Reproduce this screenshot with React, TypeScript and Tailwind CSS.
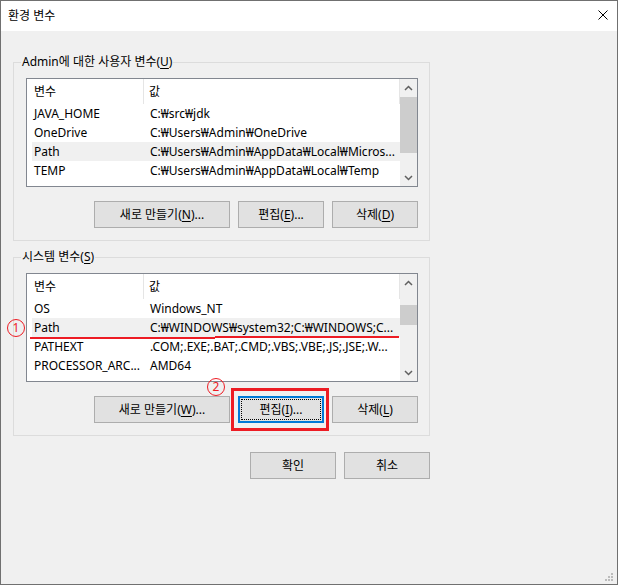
type Row = { name: string; value: string };

const userVars: Row[] = [
  { name: "JAVA_HOME", value: "C:₩src₩jdk" },
  { name: "OneDrive", value: "C:₩Users₩Admin₩OneDrive" },
  { name: "Path", value: "C:₩Users₩Admin₩AppData₩Local₩Micros..." },
  { name: "TEMP", value: "C:₩Users₩Admin₩AppData₩Local₩Temp" },
];

const systemVars: Row[] = [
  { name: "OS", value: "Windows_NT" },
  { name: "Path", value: "C:₩WINDOWS₩system32;C:₩WINDOWS;C..." },
  { name: "PATHEXT", value: ".COM;.EXE;.BAT;.CMD;.VBS;.VBE;.JS;.JSE;.W..." },
  { name: "PROCESSOR_ARC...", value: "AMD64" },
];

function Chevron({ up }: { up?: boolean }) {
  return (
    <svg width="9" height="6" viewBox="0 0 9 6">
      <polyline
        points={up ? "1,5 4.5,1.5 8,5" : "1,1 4.5,4.5 8,1"}
        fill="none"
        stroke="#606060"
        strokeWidth="1.5"
      />
    </svg>
  );
}

function ListView({
  rows,
  selected,
  thumbTop,
  thumbHeight,
  marked,
}: {
  rows: Row[];
  selected: number;
  thumbTop: string;
  thumbHeight: string;
  marked?: boolean;
}) {
  return (
    <div className="flex h-[109px] w-[392px] overflow-hidden border border-[#828790] bg-white">
      <div className="min-w-0 flex-1">
        {/* header */}
        <div className="flex h-[25px] items-center">
          <div className="flex h-full w-[117px] items-center border-r border-[#e5e5e5] pl-[7px]">변수</div>
          <div className="flex h-full flex-1 items-center border-r border-[#e5e5e5] pl-[5px]">값</div>
        </div>
        {rows.map((r, i) => (
          <div
            key={r.name}
            className={`relative ml-[5px] flex h-[19px] leading-[19px] whitespace-nowrap ${
              i === selected ? "bg-[#f0f0f0]" : ""
            }`}
          >
            <div className="w-[116px] overflow-hidden pl-[2px]">{r.name}</div>
            <div className="min-w-0 flex-1 overflow-hidden pl-[2px]">{r.value}</div>
            {marked && i === selected && (
              <>
                <div className="absolute left-[-2px] top-[19px] h-[2px] w-[185px] bg-[#ed1c24]" />
                <div className="absolute left-[183px] right-[1px] top-[18px] h-[2px] bg-[#ed1c24]" />
              </>
            )}
          </div>
        ))}
      </div>
      {/* scrollbar */}
      <div className="flex w-[17px] flex-col bg-[#f0f0f0]">
        <div className="flex h-[17px] items-center justify-center">
          <Chevron up />
        </div>
        <div className="flex-1">
          <div className={`${thumbTop} ${thumbHeight} bg-[#cdcdcd]`} />
        </div>
        <div className="flex h-[17px] items-center justify-center">
          <Chevron />
        </div>
      </div>
    </div>
  );
}

function Btn({
  children,
  w = "w-[86px]",
  focused,
  boxed,
}: {
  children: React.ReactNode;
  w?: string;
  focused?: boolean;
  boxed?: boolean;
}) {
  return (
    <div className={`relative h-[27px] ${w}`}>
      <div
        className={`relative flex h-full w-full items-center justify-center bg-[#e1e1e1] ${
          focused ? "border-2 border-[#0078d7]" : "border border-[#adadad]"
        }`}
      >
        {focused && <div className="absolute inset-[1px] border border-dotted border-black" />}
        <span>{children}</span>
      </div>
      {boxed && (
        <div className="pointer-events-none absolute -bottom-[8px] -left-[7px] -right-[5px] -top-[8px] border-[3px] border-[#ed1c24]" />
      )}
    </div>
  );
}

function Group({
  label,
  accel,
  children,
  className = "",
}: {
  label: string;
  accel: string;
  children: React.ReactNode;
  className?: string;
}) {
  return (
    <fieldset className={`w-[417px] border border-[#dcdcdc] ${className}`}>
      <legend className="ml-[7px] px-[1px] text-[12px] leading-[16px]">
        {label}(<span className="underline underline-offset-2">{accel}</span>)
      </legend>
      <div className="pb-[12px] pl-[12px] pt-[8px]">{children}</div>
    </fieldset>
  );
}

function Circled({ n, className }: { n: string; className: string }) {
  return (
    <div
      className={`absolute flex h-[18px] w-[18px] items-center justify-center rounded-full border border-[#ed1c24] text-[12px] leading-none text-[#ed1c24] ${className}`}
    >
      {n}
    </div>
  );
}

export default function App() {
  return (
    <div className="relative flex h-[585px] w-[618px] flex-col border border-[#707070] bg-[#f0f0f0] font-['Noto_Sans','Noto_Sans_CJK_KR',sans-serif] text-[12px] text-black">
      {/* Title bar */}
      <div className="flex h-[30px] items-center justify-between bg-white pl-[7px] pr-[9px]">
        <span>환경 변수</span>
        <svg width="10" height="10" viewBox="0 0 10 10" className="-mt-[3px]">
          <path d="M0.5 0.5 L9.5 9.5 M9.5 0.5 L0.5 9.5" stroke="#000" strokeWidth="1" />
        </svg>
      </div>

      <div className="pl-[12px]">
        <Group label="Admin에 대한 사용자 변수" accel="U" className="mt-[23px]">
          <ListView rows={userVars} selected={2} thumbTop="mt-[1px]" thumbHeight="h-[56px]" />
          <div className="mt-[14px] flex w-[392px] justify-end gap-[8px]">
            <Btn w="w-[136px]">
              새로 만들기(<span className="underline underline-offset-2">N</span>)...
            </Btn>
            <Btn>
              편집(<span className="underline underline-offset-2">E</span>)...
            </Btn>
            <Btn>
              삭제(<span className="underline underline-offset-2">D</span>)
            </Btn>
          </div>
        </Group>

        <Group label="시스템 변수" accel="S" className="mt-[8px]">
          <ListView
            rows={systemVars}
            selected={1}
            thumbTop="mt-[14px]"
            thumbHeight="h-[20px]"
            marked
          />
          <div className="mt-[14px] flex w-[392px] justify-end gap-[8px]">
            <Btn w="w-[136px]">
              새로 만들기(<span className="underline underline-offset-2">W</span>)...
            </Btn>
            <Btn focused boxed>
              편집(<span className="underline underline-offset-2">I</span>)...
            </Btn>
            <Btn>
              삭제(<span className="underline underline-offset-2">L</span>)
            </Btn>
          </div>
        </Group>

        <div className="mt-[16px] flex w-[417px] justify-end gap-[8px]">
          <Btn>확인</Btn>
          <Btn>취소</Btn>
        </div>
      </div>

      {/* annotations */}
      <Circled n="1" className="left-[6px] top-[318px]" />
      <Circled n="2" className="left-[206px] top-[377px]" />

      {/* resize grip */}
      <svg width="9" height="9" viewBox="0 0 9 9" className="absolute bottom-[2px] right-[3px]">
        <rect x="6" y="0" width="2" height="2" fill="#bcbcbc" />
        <rect x="3" y="3" width="2" height="2" fill="#bcbcbc" />
        <rect x="6" y="3" width="2" height="2" fill="#bcbcbc" />
        <rect x="0" y="6" width="2" height="2" fill="#bcbcbc" />
        <rect x="3" y="6" width="2" height="2" fill="#bcbcbc" />
        <rect x="6" y="6" width="2" height="2" fill="#bcbcbc" />
      </svg>
    </div>
  );
}
